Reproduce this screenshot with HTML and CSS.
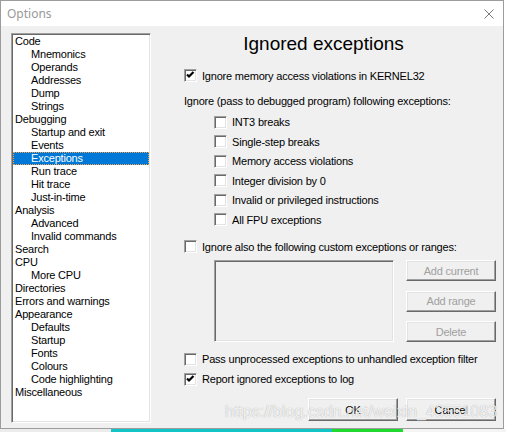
FILE: index.html
```html
<!DOCTYPE html>
<html lang="en">
<head>
    <meta charset="UTF-8">
    <meta name="viewport" content="width=device-width, initial-scale=1.0">
    <title>Options</title>
    <link rel="stylesheet" href="styles.css">
</head>
<body>

<div class="window">
    <div class="titlebar">
        <span class="title">Options</span>
        <svg class="close" width="10" height="10" viewBox="0 0 10 10">
            <path d="M0.5 0.5 L9.5 9.5 M9.5 0.5 L0.5 9.5" stroke="#7a7a7a" stroke-width="1" fill="none"/>
        </svg>
    </div>

    <div class="client">
        <!-- Option categories -->
        <ul class="tree">
            <li>Code</li>
            <li class="sub">Mnemonics</li>
            <li class="sub">Operands</li>
            <li class="sub">Addresses</li>
            <li class="sub">Dump</li>
            <li class="sub">Strings</li>
            <li>Debugging</li>
            <li class="sub">Startup and exit</li>
            <li class="sub">Events</li>
            <li class="sub selected">Exceptions</li>
            <li class="sub">Run trace</li>
            <li class="sub">Hit trace</li>
            <li class="sub">Just-in-time</li>
            <li>Analysis</li>
            <li class="sub">Advanced</li>
            <li class="sub">Invalid commands</li>
            <li>Search</li>
            <li>CPU</li>
            <li class="sub">More CPU</li>
            <li>Directories</li>
            <li>Errors and warnings</li>
            <li>Appearance</li>
            <li class="sub">Defaults</li>
            <li class="sub">Startup</li>
            <li class="sub">Fonts</li>
            <li class="sub">Colours</li>
            <li class="sub">Code highlighting</li>
            <li>Miscellaneous</li>
        </ul>

        <!-- Exceptions page -->
        <div class="page">
            <h1>Ignored exceptions</h1>

            <label class="check first">
                <span class="box"><svg width="11" height="11" viewBox="0 0 11 11"><polyline points="2,4.5 4,6.5 8.5,2" stroke="#000" stroke-width="2.2" fill="none"/></svg></span>
                Ignore memory access violations in KERNEL32
            </label>

            <p class="caption">Ignore (pass to debugged program) following exceptions:</p>

            <div class="sublist">
                <label class="check"><span class="box"></span>INT3 breaks</label>
                <label class="check"><span class="box"></span>Single-step breaks</label>
                <label class="check"><span class="box"></span>Memory access violations</label>
                <label class="check"><span class="box"></span>Integer division by 0</label>
                <label class="check"><span class="box"></span>Invalid or privileged instructions</label>
                <label class="check"><span class="box"></span>All FPU exceptions</label>
            </div>

            <label class="check custom"><span class="box"></span>Ignore also the following custom exceptions or ranges:</label>

            <div class="ranges">
                <div class="rangebox"></div>
                <div class="range-buttons">
                    <button disabled>Add current</button>
                    <button disabled>Add range</button>
                    <button disabled>Delete</button>
                </div>
            </div>

            <label class="check pass"><span class="box"></span>Pass unprocessed exceptions to unhandled exception filter</label>
            <label class="check">
                <span class="box"><svg width="11" height="11" viewBox="0 0 11 11"><polyline points="2,4.5 4,6.5 8.5,2" stroke="#000" stroke-width="2.2" fill="none"/></svg></span>
                Report ignored exceptions to log
            </label>

            <div class="actions">
                <button>OK</button>
                <button>Cancel</button>
            </div>
        </div>
    </div>

    <div class="watermark">https://blog.csdn.net/weixin_43551083</div>
</div>

<!-- bits of the window behind the dialog -->
<div class="behind">
    <span class="seg grey"></span>
    <span class="seg cyan"></span>
    <span class="seg green"></span>
    <span class="seg white"></span>
</div>

</body>
</html>
```

FILE: styles.css
```css
body {
    margin: 0;
    background-color: #fff;
    font-family: "Liberation Sans", Arial, sans-serif;
    overflow: hidden;
}

.window {
    position: relative;
    width: 504px;
    height: 429px;
    box-sizing: border-box;
    border: 1px solid #9c9c9c;
    background-color: #f0f0f0;
}

.titlebar {
    height: 25px;
    background-color: #fff;
    display: flex;
    align-items: center;
    justify-content: space-between;
    padding: 0 9px 0 6px;
}

.title {
    font-family: "Noto Sans", sans-serif;
    font-size: 12px;
    color: #999;
}

.close {
    display: block;
}

.client {
    display: flex;
    padding: 7px 0 0 10px;
    font-size: 11px;
    letter-spacing: -0.2px;
    color: #000;
}

/* sunken 3D frame used by the list boxes */
.tree,
.rangebox {
    box-sizing: border-box;
    border: 1px solid;
    border-color: #a0a0a0 #fff #fff #a0a0a0;
    box-shadow: inset 1px 1px #696969, inset -1px -1px #e3e3e3;
}

.tree {
    width: 140px;
    height: 390px;
    margin: 0;
    padding: 1px;
    list-style: none;
    background-color: #fff;
}

.tree li {
    height: 13px;
    line-height: 13px;
    padding-left: 2px;
    white-space: nowrap;
}

.tree li.sub {
    padding-left: 18px;
}

.tree li.selected {
    background-color: #0078d7;
    color: #fff;
    outline: 1px dotted #f5a04a;
    outline-offset: -1px;
}

.page {
    flex: 1;
    display: flex;
    flex-direction: column;
    padding: 0 7px 0 33px;
}

h1 {
    margin: -1px 0 0 -33px;
    height: 24px;
    line-height: 24px;
    font-size: 19px;
    font-weight: normal;
    letter-spacing: 0;
    text-align: center;
}

.check {
    display: flex;
    align-items: center;
    gap: 5px;
    height: 20px;
    white-space: nowrap;
}

.check.first {
    margin-top: 9.5px;
}

.box {
    width: 13px;
    height: 13px;
    box-sizing: border-box;
    flex: none;
    background-color: #fff;
    border: 1px solid;
    border-color: #a0a0a0 #fff #fff #a0a0a0;
    box-shadow: inset 1px 1px #696969, inset -1px -1px #e3e3e3;
}

.box svg {
    display: block;
}

.caption {
    margin: 5.5px 0 0 0;
    height: 20px;
    line-height: 20px;
}

.sublist {
    padding: 1.5px 0 0 30px;
}

.sublist .check {
    height: 19.5px;
}

.check.custom {
    margin-top: 7px;
}

.ranges {
    display: flex;
    margin: 3.5px 0 0 30px;
    height: 82px;
}

.rangebox {
    width: 180px;
    height: 82px;
    background-color: #f0f0f0;
}

.range-buttons {
    display: flex;
    flex-direction: column;
    gap: 9.5px;
    margin-left: 12px;
}

button {
    width: 90px;
    height: 21px;
    padding: 0;
    font-family: "Liberation Sans", Arial, sans-serif;
    font-size: 11px;
    letter-spacing: -0.2px;
    color: #000;
    background-color: #f0f0f0;
    border: 1px solid;
    border-color: #fff #696969 #696969 #fff;
    box-shadow: inset -1px -1px #a0a0a0, inset 1px 1px #e3e3e3;
}

button:disabled {
    color: #a0a0a0;
}

.check.pass {
    margin-top: 7px;
}

.actions {
    display: flex;
    justify-content: flex-end;
    gap: 8px;
    margin-top: 9px;
}

.actions button {
    height: 23px;
}

.watermark {
    position: absolute;
    left: 224px;
    top: 402px;
    font-size: 16px;
    color: rgba(255, 255, 255, 0.85);
    text-shadow: 0 0 1px rgba(0, 0, 0, 0.35);
    white-space: nowrap;
    pointer-events: none;
}

.behind {
    display: flex;
    height: 3px;
}

.seg {
    display: block;
    height: 3px;
}

.grey {
    width: 111px;
    background-color: #ececec;
}

.cyan {
    width: 221px;
    background-color: #12c4c8;
}

.green {
    width: 71px;
    background-color: #20d830;
}

.white {
    flex: 1;
    background-color: #f4f4f4;
}
```
